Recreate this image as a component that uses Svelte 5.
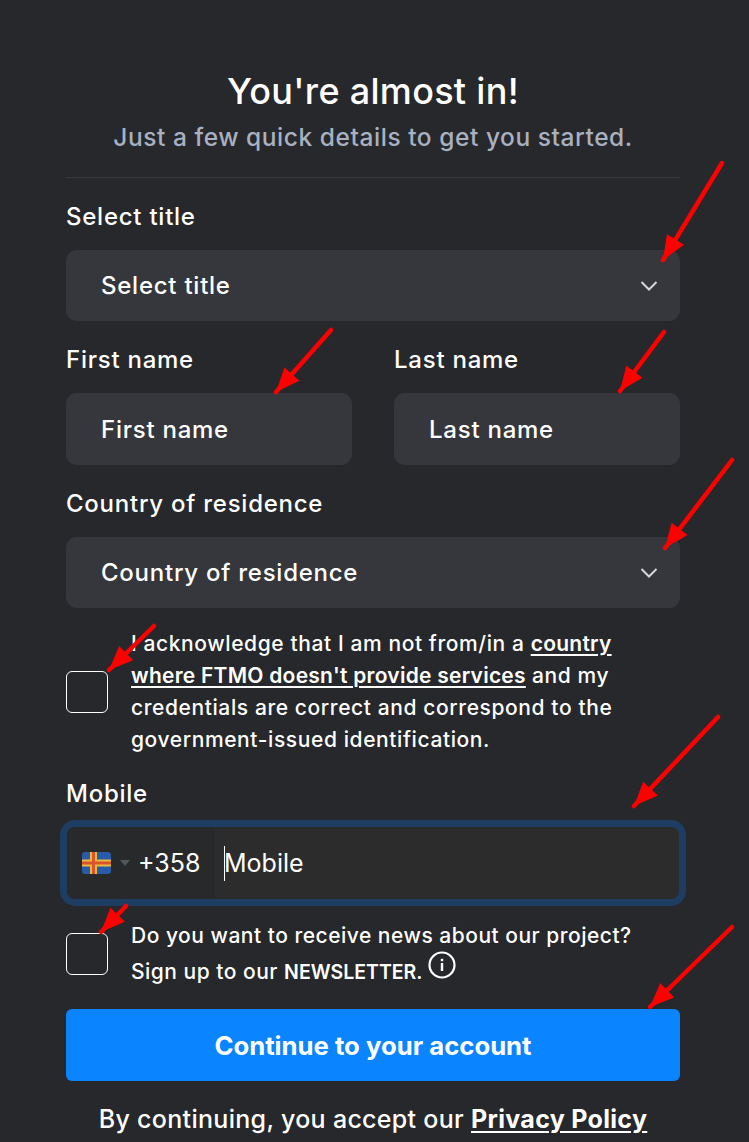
<script lang="ts">
let title = $state('');
let firstName = $state('');
let lastName = $state('');
let country = $state('');
let mobile = $state('');
let accepted = $state(false);
let newsletter = $state(false);

// red annotation arrows that sit on top of the form: [x1, y1, x2, y2]
const arrows = [
  [722, 163, 663, 260],
  [331, 330, 276, 392],
  [664, 332, 620, 391],
  [732, 460, 665, 548],
  [154, 626, 109, 670],
  [718, 717, 634, 806],
  [126, 906, 101, 932],
  [732, 927, 650, 1007]
];

function head(a: number[]) {
  const [x1, y1, x2, y2] = a;
  const len = Math.hypot(x2 - x1, y2 - y1);
  const ux = (x2 - x1) / len;
  const uy = (y2 - y1) / len;
  const bx = x2 - ux * 24;
  const by = y2 - uy * 24;
  const px = -uy * 10;
  const py = ux * 10;
  return `${x2},${y2} ${bx + px},${by + py} ${bx - px},${by - py}`;
}
</script>

<style>
:global(body) {
  margin: 0;
  background: #26282b;
}
.page {
  position: relative;
  width: 749px;
  height: 1142px;
  overflow: hidden;
  box-sizing: border-box;
  padding: 69px 69px 0 66px;
  background: #26282b;
  color: #fff;
  font-family: Inter, "Open Sans", sans-serif;
  font-size: 24px;
  letter-spacing: 0.75px;
  font-weight: 500;
}
h1 {
  margin: 0;
  text-align: center;
  font-size: 36px;
  line-height: 44px;
  letter-spacing: 0.3px;
  font-weight: 500;
}
.sub {
  margin: 6px 0 0;
  text-align: center;
  font-size: 24.5px;
  letter-spacing: 0.55px;
  line-height: 36px;
  color: #a9b1c0;
}
hr {
  margin: 22px 0 0;
  border: 0;
  border-top: 1px solid #36383c;
}
.label {
  display: block;
  line-height: 34px;
  margin-bottom: 16px;
}
.first {
  margin-top: 22px;
}
.field {
  display: flex;
  align-items: center;
  justify-content: space-between;
  box-sizing: border-box;
  width: 100%;
  height: 71px;
  padding: 0 22px 0 35px;
  border: 0;
  border-radius: 11px;
  background: #36373c;
  color: #fff;
  font: inherit;
  letter-spacing: inherit;
  outline: none;
}
.field::placeholder, .phone input::placeholder {
  color: #fff;
  opacity: 1;
}
.row {
  display: grid;
  grid-template-columns: 286px 286px;
  gap: 42px;
  margin-top: 22px;
}
.row .field {
  height: 72px;
}
.block {
  margin-top: 22px;
}
.check {
  display: grid;
  grid-template-columns: 42px 1fr;
  column-gap: 23px;
  align-items: center;
  font-size: 21px;
  letter-spacing: 0.5px;
  line-height: 32px;
}
.check a {
  color: #fff;
  font-weight: 600;
  letter-spacing: 0.25px;
  text-decoration: underline;
  text-underline-offset: 3px;
  text-decoration-thickness: 2px;
}
.check input {
  appearance: none;
  width: 42px;
  height: 42px;
  margin: 0;
  border: 1px solid #fff;
  border-radius: 6px;
  background: transparent;
}
.ack {
  margin-top: 20px;
  letter-spacing: 0.6px;
}
.mobile {
  margin-top: 21px;
}
.mobile .label {
  margin-bottom: 9px;
}
.phone {
  display: flex;
  align-items: center;
  height: 86px;
  box-sizing: border-box;
  margin: 0 -6px;
  border: 7px solid #1e3d63;
  border-radius: 15px;
  background: #2c2c2c;
  overflow: hidden;
}
.dial {
  display: flex;
  align-items: center;
  align-self: stretch;
  width: 148px;
  flex: none;
  box-sizing: border-box;
  padding-left: 15px;
  background: #28292b;
  font-size: 25px;
  letter-spacing: 0;
  font-weight: 400;
}
.flag {
  width: 29px;
  height: 22px;
  border-radius: 3px;
}
.caret {
  width: 0;
  height: 0;
  margin: 0 8px 0 9px;
  border-left: 5px solid transparent;
  border-right: 5px solid transparent;
  border-top: 6px solid #50565a;
}
.cursor {
  flex: none;
  width: 1px;
  height: 35px;
  margin-left: 9px;
  background: #fff;
}
.phone input {
  flex: 1;
  min-width: 0;
  margin-left: -1px;
  padding: 0;
  border: 0;
  outline: none;
  background: transparent;
  color: #fff;
  font: inherit;
  font-size: 25px;
  letter-spacing: 0;
  font-weight: 400;
}
.news {
  margin-top: 12px;
  line-height: 36px;
}
.news b {
  font-size: 19.5px;
  font-weight: 600;
  letter-spacing: 0;
}
.info {
  margin: -8px 0 0 -1px;
  vertical-align: baseline;
}
.submit {
  display: block;
  width: 100%;
  height: 72px;
  margin-top: 19px;
  border: 0;
  border-radius: 6px;
  background: #0a84ff;
  color: #fff;
  font: inherit;
  font-size: 25.7px;
  letter-spacing: 0;
  font-weight: 700;
}
.foot {
  margin: 20px 0 0;
  text-align: center;
  font-size: 25px;
  letter-spacing: 0.3px;
  line-height: 36px;
}
.foot a {
  color: #fff;
  font-weight: 700;
  text-decoration: underline;
  text-underline-offset: 3px;
}
.arrows {
  position: absolute;
  left: 0;
  top: 0;
  pointer-events: none;
}
</style>

{#snippet chevron()}
  <svg width="18" height="12" viewBox="0 0 18 12" fill="none">
    <path d="M1.5 2l7.5 7.5L16.5 2" stroke="#d5d7db" stroke-width="2"/>
  </svg>
{/snippet}

<div class="page">
  <h1>You're almost in!</h1>
  <p class="sub">Just a few quick details to get you started.</p>
  <hr />

  <div class="first">
    <span class="label">Select title</span>
    <div class="field"><span>{title || 'Select title'}</span>{@render chevron()}</div>
  </div>

  <div class="row">
    <div>
      <label class="label" for="first">First name</label>
      <input class="field" id="first" placeholder="First name" bind:value={firstName} />
    </div>
    <div>
      <label class="label" for="last">Last name</label>
      <input class="field" id="last" placeholder="Last name" bind:value={lastName} />
    </div>
  </div>

  <div class="block">
    <span class="label">Country of residence</span>
    <div class="field"><span>{country || 'Country of residence'}</span>{@render chevron()}</div>
  </div>

  <div class="check ack">
    <input type="checkbox" bind:checked={accepted} />
    <div>I acknowledge that I am not from/in a <a href="#countries">country<br />where FTMO doesn't provide services</a> and my<br />credentials are correct and correspond to the<br />government-issued identification.</div>
  </div>

  <div class="mobile">
    <label class="label" for="mobile">Mobile</label>
    <div class="phone">
      <div class="dial">
        <svg class="flag" viewBox="0 0 29 22">
          <rect width="29" height="22" fill="#2a5ba8"/>
          <rect x="8" width="7" height="22" fill="#e8b93c"/>
          <rect y="7.5" width="29" height="7" fill="#e8b93c"/>
          <rect x="10" width="3" height="22" fill="#d9542b"/>
          <rect y="9.5" width="29" height="3" fill="#d9542b"/>
        </svg>
        <span class="caret"></span>
        <span>+358</span>
      </div>
      <span class="cursor"></span>
      <input id="mobile" placeholder="Mobile" bind:value={mobile} />
    </div>
  </div>

  <div class="check news">
    <input type="checkbox" bind:checked={newsletter} />
    <div>Do you want to receive news about our project?<br />Sign up to our <b>NEWSLETTER.</b>
      <svg class="info" width="28" height="28" viewBox="0 0 28 28" fill="none">
        <circle cx="14" cy="14" r="12.5" stroke="#fff" stroke-width="2.2"/>
        <rect x="12.8" y="12" width="2.4" height="8" fill="#fff"/>
        <rect x="12.8" y="7.8" width="2.4" height="2.4" fill="#fff"/>
      </svg>
    </div>
  </div>

  <button class="submit">Continue to your account</button>
  <p class="foot">By continuing, you accept our <a href="#privacy">Privacy Policy</a></p>

  <svg class="arrows" width="749" height="1142">
    {#each arrows as a}
      <line x1={a[0]} y1={a[1]} x2={a[2]} y2={a[3]} stroke="#ff0000" stroke-width="4.5" stroke-linecap="round"/>
      <polygon points={head(a)} fill="#ff0000"/>
    {/each}
  </svg>
</div>
